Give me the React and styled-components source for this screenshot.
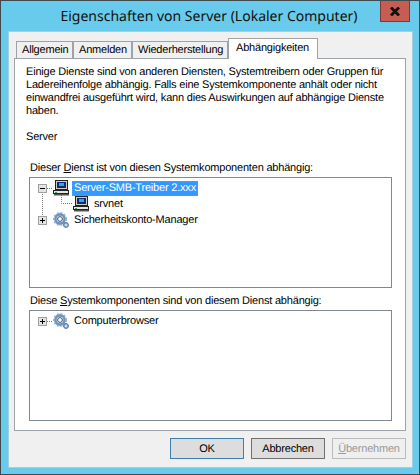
import React from 'react';
import styled, { createGlobalStyle } from 'styled-components';

const Global = createGlobalStyle`
  html, body { margin: 0; padding: 0; background: #69cbeb; }
  * { box-sizing: border-box; }
`;

const Win = styled.div`
  width: 420px; height: 475px;
  background: #69cbeb;
  border: 1px solid #3d4a50;
  display: flex; flex-direction: column;
  font-family: "Liberation Sans", sans-serif;
  font-size: 11px;
  letter-spacing: -0.2px;
  text-rendering: geometricPrecision;
  color: #000;
  position: relative;
  overflow: hidden;
`;
const TitleBar = styled.div`
  height: 30px; flex: none;
  display: flex; align-items: center; justify-content: center;
  font-family: "Noto Sans", sans-serif;
  font-size: 14px;
  letter-spacing: 0;
  padding-right: 2px;
  color: #111;
`;
const Close = styled.div`
  position: absolute; right: 9px; top: 0;
  width: 30px; height: 21px;
  background: #c75c52;
  border: 1px solid #7d3a34;
  border-top: none;
  display: flex; align-items: center; justify-content: center;
`;
const Client = styled.div`
  flex: 1; margin: 0 6px 6px 7px;
  background: #f0f0f0;
  border: 1px solid #a4cfdf;
  padding: 6px 6px 0 5px;
  display: flex; flex-direction: column;
`;
const Tabs = styled.div`
  display: flex; align-items: flex-end; height: 21px; padding-left: 2px;
  position: relative; z-index: 1; margin-bottom: -1px;
`;
const Tab = styled.div`
  width: ${p => p.$w}px;
  flex: none;
  height: ${p => (p.$active ? '21px' : '18px')};
  padding: ${p => (p.$active ? '3px 0 0 7px' : '2px 0 0 5px')};
  border: 1px solid #9ea3a7;
  border-bottom: ${p => (p.$active ? 'none' : '1px solid #9ea3a7')};
  background: ${p => (p.$active ? '#fff' : '#f0f0f0')};
  white-space: nowrap;
  line-height: 13px;
`;
const Panel = styled.div`
  height: 373px; background: #fff;
  border: 1px solid #9ea3a7;
  padding: 7px 11px 0 11px;
  display: flex; flex-direction: column;
`;
const Intro = styled.p`
  margin: 0; line-height: 13px; height: 52px; width: 368px;
`;
const ServiceName = styled.div`
  margin-top: 13px; height: 13px; line-height: 13px;
`;
const Label = styled.div`
  height: 13px; line-height: 13px;
  margin: ${p => p.$mt}px 0 0 4px;
`;
const Under = styled.span`text-decoration: underline;`;
const Tree = styled.div`
  height: 111px; margin: 2px 0 0 3px; width: 363px;
  border: 1px solid #828790;
  background: #fff;
  padding-top: 2px;
  position: relative;
`;
const Row = styled.div`
  height: 16px; display: flex; align-items: center;
  padding-left: ${p => p.$indent}px;
  line-height: 13px;
  position: relative;
`;
const Expander = styled.svg`width: 9px; height: 9px; flex: none; margin-right: 6px;`;
const IconBox = styled.svg`width: 16px; height: 16px; flex: none; margin: -1px 3px 0 0;`;
const RowText = styled.span`
  padding: 0 2px;
  height: 15px; line-height: 14px;
  ${p => p.$selected && `
    background: #3399ff; color: #fff;
    outline: 1px dotted #d9822b; outline-offset: -1px;
  `}
`;
const Connectors = styled.svg`
  position: absolute; left: 0; top: 0; width: 60px; height: 60px; pointer-events: none;
`;
const Footer = styled.div`
  flex: 1; display: flex; justify-content: flex-end; align-items: flex-start;
  gap: 7px; padding-top: 7px;
`;
const Btn = styled.div`
  width: 74px; height: 21px;
  display: flex; align-items: center; justify-content: center;
  background: ${p => (p.$disabled ? '#efefef' : '#dddddd')};
  border: 1px solid ${p => (p.$default ? '#3c7fb1' : p.$disabled ? '#bcbcbc' : '#707070')};
  color: ${p => (p.$disabled ? '#9a9a9a' : '#000')};
`;

const Box = ({ plus }) => (
  <Expander viewBox="0 0 9 9">
    <rect x="0.5" y="0.5" width="8" height="8" fill="#e4e4e4" stroke="#a0a0a0" />
    <path d="M2 4.5H7" stroke="#000" />
    {plus && <path d="M4.5 2V7" stroke="#000" />}
  </Expander>
);

const Computer = () => (
  <IconBox viewBox="0 0 16 16">
    <rect x="2.5" y="0.5" width="12" height="9" fill="#cfcfc4" stroke="#222" />
    <rect x="4" y="2" width="9" height="6" fill="#0a2a7a" />
    <rect x="6" y="3" width="5" height="3" fill="#22b0e8" />
    <rect x="0.5" y="10.5" width="15" height="3" fill="#e6e6dc" stroke="#222" />
    <rect x="2" y="12" width="2" height="1" fill="#22b14c" />
    <rect x="1" y="14" width="15" height="1.5" fill="#555" />
  </IconBox>
);

const Gear = () => (
  <IconBox viewBox="0 0 16 16">
    <circle cx="7" cy="7" r="4.6" fill="none" stroke="#6d93bd" strokeWidth="2.6" />
    <circle cx="7" cy="7" r="6.2" fill="none" stroke="#93aecd" strokeWidth="1.6" strokeDasharray="2 1.6" />
    <circle cx="7" cy="7" r="2.4" fill="#fff" stroke="#2e4a70" />
    <circle cx="13" cy="13" r="2.4" fill="#a3bcd8" stroke="#456a95" />
    <circle cx="13" cy="13" r="0.8" fill="#fff" />
  </IconBox>
);

export default function App() {
  return (
    <Win>
      <Global />
      <TitleBar>Eigenschaften von Server (Lokaler Computer)</TitleBar>
      <Close>
        <svg width="10" height="9" viewBox="0 0 10 9">
          <path d="M1 0.5L9 8.5M9 0.5L1 8.5" stroke="#111" strokeWidth="2.8" />
        </svg>
      </Close>
      <Client>
        <Tabs>
          <Tab $w={57}>Allgemein</Tab>
          <Tab $w={59}>Anmelden</Tab>
          <Tab $w={96}>Wiederherstellung</Tab>
          <Tab $active $w={90}>Abhängigkeiten</Tab>
        </Tabs>
        <Panel>
          <Intro>
            Einige Dienste sind von anderen Diensten, Systemtreibern oder Gruppen für Ladereihenfolge abhängig. Falls eine Systemkomponente anhält oder nicht einwandfrei ausgeführt wird, kann dies Auswirkungen auf abhängige Dienste haben.
          </Intro>
          <ServiceName>Server</ServiceName>
          <Label $mt={18}>Dieser <Under>D</Under>ienst ist von diesen Systemkomponenten abhängig:</Label>
          <Tree>
            <Connectors viewBox="0 0 60 60">
              <path d="M12.5 14V38M17 10.5H23M31.5 17V25.5H43" stroke="#777" strokeDasharray="1 1" fill="none" />
            </Connectors>
            <Row $indent={8}><Box /><Computer /><RowText $selected>Server-SMB-Treiber 2.xxx</RowText></Row>
            <Row $indent={43}><Computer /><RowText>srvnet</RowText></Row>
            <Row $indent={8}><Box plus /><Gear /><RowText>Sicherheitskonto-Manager</RowText></Row>
          </Tree>
          <Label $mt={7}>Diese <Under>S</Under>ystemkomponenten sind von diesem Dienst abhängig:</Label>
          <Tree>
            <Connectors viewBox="0 0 60 60">
              <path d="M17 10.5H23" stroke="#777" strokeDasharray="1 1" fill="none" />
            </Connectors>
            <Row $indent={8}><Box plus /><Gear /><RowText>Computerbrowser</RowText></Row>
          </Tree>
        </Panel>
        <Footer>
          <Btn $default>OK</Btn>
          <Btn>Abbrechen</Btn>
          <Btn $disabled><span><Under>Ü</Under>bernehmen</span></Btn>
        </Footer>
      </Client>
    </Win>
  );
}
